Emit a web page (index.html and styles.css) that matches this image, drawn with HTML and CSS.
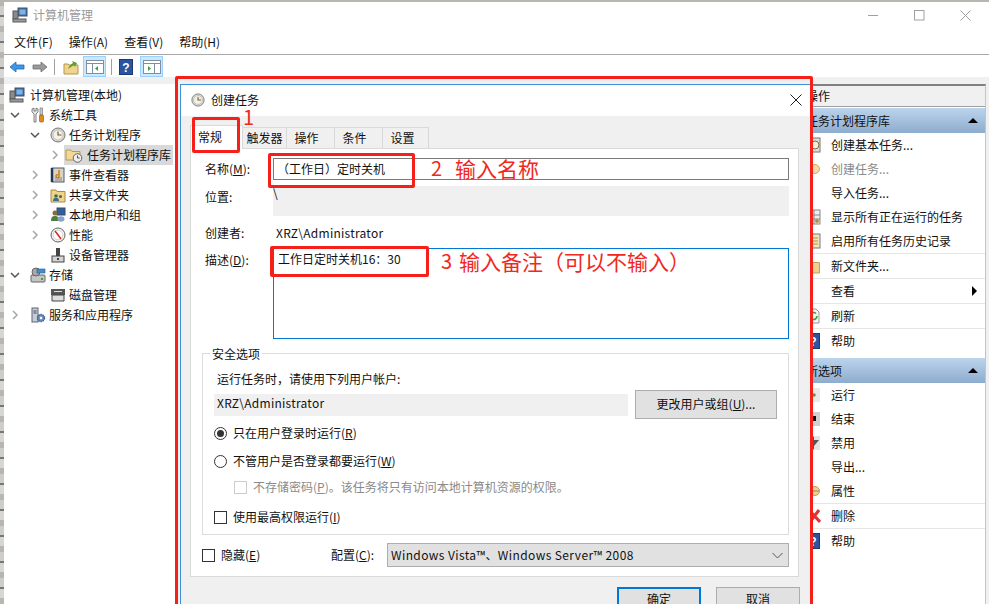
FILE: index.html
```html
<!DOCTYPE html>
<html lang="zh-CN">
<head>
<meta charset="utf-8">
<title>计算机管理</title>
<link rel="stylesheet" href="styles.css">
</head>
<body>
<svg class="defs" width="0" height="0" aria-hidden="true">
  <defs>
    <symbol id="pc" viewBox="0 0 16 16">
      <rect x="6" y="1" width="9" height="8" fill="#3a6ea8" stroke="#40506a"/>
      <rect x="7.500" y="2.500" width="6" height="5" fill="#7fb2e5"/>
      <rect x="1" y="4" width="5" height="8" fill="#8a8a8a" stroke="#555"/>
      <rect x="1" y="12" width="13" height="3" fill="#9a9a9a" stroke="#5c5c5c"/>
    </symbol>
    <symbol id="tools" viewBox="0 0 16 16">
      <path d="M2 2v3l2 2v8h2V7l2-2V2L6 1v3H4V1z" fill="#e8e8e8" stroke="#666" stroke-width=".8"/>
      <rect x="10" y="1" width="2.500" height="7" fill="#ccc" stroke="#666" stroke-width=".6"/>
      <rect x="9.500" y="8" width="4" height="7" rx="1" fill="#e08a1c" stroke="#8a5210" stroke-width=".6"/>
    </symbol>
    <symbol id="clock" viewBox="0 0 16 16">
      <circle cx="8" cy="8" r="7" fill="#d8d8d8" stroke="#777"/>
      <circle cx="8" cy="8" r="5" fill="#f4f1e6" stroke="#aaa" stroke-width=".6"/>
      <path d="M8 4.500V8h3.500" fill="none" stroke="#7a5a20" stroke-width="1.200"/>
    </symbol>
    <symbol id="folderclock" viewBox="0 0 18 16">
      <path d="M1 3h5l1 1.500h8V13H1z" fill="#f2d896" stroke="#b89a50"/>
      <circle cx="12.500" cy="11" r="4.300" fill="#eee" stroke="#666"/>
      <path d="M12.500 8.500V11h2.200" fill="none" stroke="#555"/>
    </symbol>
    <symbol id="log" viewBox="0 0 16 16">
      <rect x="2" y="1" width="12" height="14" fill="#d9d3c0" stroke="#4a5a78"/>
      <path d="M2 1v14" stroke="#24345a" stroke-width="2.500"/>
      <path d="M9 3v6a1.500 1.500 0 1 1-1-1.300" fill="none" stroke="#c9781a" stroke-width="1.400"/>
      <path d="M5 11h7M5 13h7" stroke="#8a8a8a"/>
    </symbol>
    <symbol id="share" viewBox="0 0 16 16">
      <path d="M1 3h5l1 1.500h8V15H1z" fill="#f0d38a" stroke="#a88c48"/>
      <circle cx="6" cy="9" r="1.800" fill="#3f6d3f"/>
      <path d="M3 14c0-2.500 1-3 3-3s3 .5 3 3z" fill="#3f6d8f"/>
      <circle cx="10.500" cy="9.500" r="1.500" fill="#3f6d3f"/>
    </symbol>
    <symbol id="users" viewBox="0 0 16 16">
      <rect x="7" y="1" width="8" height="7" fill="#2f5f9f" stroke="#3d4a60"/>
      <circle cx="5" cy="6" r="2.500" fill="#8a6a3a"/>
      <path d="M1 14c0-4 1.500-5 4-5s4 1 4 5z" fill="#4f7f3f"/>
      <ellipse cx="11" cy="12" rx="3.500" ry="2.800" fill="#8aa4c4"/>
    </symbol>
    <symbol id="perf" viewBox="0 0 16 16">
      <circle cx="8" cy="8" r="7" fill="#f2f2f2" stroke="#666"/>
      <circle cx="8" cy="8" r="4.800" fill="#fff" stroke="#bbb" stroke-width=".6"/>
      <path d="M5 4l3.500 4.500L11 12" fill="none" stroke="#d8261c" stroke-width="1.500"/>
    </symbol>
    <symbol id="devices" viewBox="0 0 16 16">
      <rect x="6" y="1" width="4" height="8" fill="#444"/>
      <rect x="2" y="9" width="12" height="6" fill="#d4d4d4" stroke="#444"/>
      <rect x="7" y="11" width="2" height="2" fill="#444"/>
    </symbol>
    <symbol id="storage" viewBox="0 0 16 16">
      <rect x="1" y="8" width="14" height="7" rx="1" fill="#c4c4c4" stroke="#666"/>
      <circle cx="6" cy="5" r="4" fill="#a8a8a8" stroke="#666"/>
      <rect x="7" y="2" width="8" height="4" fill="#3f8fd0" stroke="#2a5a88" stroke-width=".6"/>
      <rect x="11" y="11" width="2" height="2" fill="#3fa040"/>
    </symbol>
    <symbol id="disk" viewBox="0 0 16 16">
      <rect x="1" y="2" width="14" height="6" fill="#555"/>
      <path d="M2 8h12v6H2z" fill="#ddd" stroke="#444"/>
      <rect x="4" y="4" width="8" height="1" fill="#ddd"/>
    </symbol>
    <symbol id="services" viewBox="0 0 16 16">
      <rect x="2" y="1" width="6" height="14" fill="#c8ccd4" stroke="#5a6478"/>
      <path d="M3.500 4h3M3.500 6h3" stroke="#445"/>
      <circle cx="11" cy="11" r="3.500" fill="#6d93c4" stroke="#3d5f8c" stroke-dasharray="1.500 .7" stroke-width="1.400"/>
      <circle cx="11" cy="11" r="1.200" fill="#fff"/>
    </symbol>
    <symbol id="help" viewBox="0 0 16 16">
      <rect x="1.500" y=".5" width="13" height="15" fill="#2a55a0" stroke="#1c3a70"/>
      <text x="8" y="13" font-size="12" font-weight="700" text-anchor="middle" fill="#fff" font-family="Liberation Sans, sans-serif">?</text>
    </symbol>
    <symbol id="chev-r" viewBox="0 0 10 10"><path d="M3 1l4 4-4 4" fill="none" stroke="#a6a6a6" stroke-width="1.500"/></symbol>
    <symbol id="chev-d" viewBox="0 0 10 10"><path d="M1 3l4 4 4-4" fill="none" stroke="#555" stroke-width="1.500"/></symbol>
  </defs>
</svg>

<div class="window">
  <header class="titlebar">
    <svg class="ic16 title-ic"><use href="#pc"/></svg>
    <span class="title-text">计算机管理</span>
    <div class="controls">
      <svg width="11" height="11" viewBox="0 0 11 11"><path d="M0 5.500h10" stroke="#a0a0a0"/></svg>
      <svg width="11" height="11" viewBox="0 0 11 11"><rect x=".5" y=".5" width="9.500" height="9.500" fill="none" stroke="#a0a0a0"/></svg>
      <svg width="11" height="11" viewBox="0 0 11 11"><path d="M.5.500l10 10M10.500.500l-10 10" stroke="#a0a0a0"/></svg>
    </div>
  </header>
  <nav class="menubar">
    <span>文件(F)</span><span>操作(A)</span><span>查看(V)</span><span>帮助(H)</span>
  </nav>
  <div class="toolbar">
    <svg class="tb-ic" viewBox="0 0 16 16"><path d="M1 8l6-5v3h8v4H7v3z" fill="#3d96e8" stroke="#1e6ab8" stroke-width=".8"/></svg>
    <svg class="tb-ic tb-fwd" viewBox="0 0 16 16"><path d="M15 8L9 3v3H1v4h8v3z" fill="#9a9a9a" stroke="#6e6e6e" stroke-width=".8"/></svg>
    <i class="tb-sep"></i>
    <svg class="tb-ic tb-up" viewBox="0 0 16 16"><path d="M1 5h4l1 1h9v9H1z" fill="#f0d48c" stroke="#b49650"/><path d="M5 10c1-3 3-5 5-6l-1-2 5 2-2 4-1-2c-2 1-4 3-6 4z" fill="#5aa02c"/></svg>
    <span class="tb-toggle">
      <svg width="18" height="16" viewBox="0 0 18 16"><rect x=".5" y="1.500" width="17" height="13" fill="#fff" stroke="#7f8f9f"/><path d="M1 4.500h16M6.500 5v9" stroke="#7f8f9f"/><path d="M12 7v5l-3-2.500z" fill="#3fa040"/></svg>
    </span>
    <i class="tb-sep tb-sep2"></i>
    <svg class="tb-ic tb-help"><use href="#help"/></svg>
    <span class="tb-toggle tb-toggle2">
      <svg width="18" height="16" viewBox="0 0 18 16"><rect x=".5" y="1.500" width="17" height="13" fill="#fff" stroke="#7f8f9f"/><path d="M1 4.500h16M11.500 5v9" stroke="#7f8f9f"/><path d="M5 7v5l3-2.500z" fill="#3fa040"/></svg>
    </span>
  </div>

  <main class="main">
    <aside class="tree">
      <div class="row l0"><svg class="ic16"><use href="#pc"/></svg><span>计算机管理(本地)</span></div>
      <div class="row l1"><svg class="chev"><use href="#chev-d"/></svg><svg class="ic16"><use href="#tools"/></svg><span>系统工具</span></div>
      <div class="row l2"><svg class="chev"><use href="#chev-d"/></svg><svg class="ic16"><use href="#clock"/></svg><span>任务计划程序</span></div>
      <div class="row l3"><svg class="chev"><use href="#chev-r"/></svg><div class="sel"><svg class="ic18"><use href="#folderclock"/></svg><span>任务计划程序库</span></div></div>
      <div class="row l2"><svg class="chev"><use href="#chev-r"/></svg><svg class="ic16"><use href="#log"/></svg><span>事件查看器</span></div>
      <div class="row l2"><svg class="chev"><use href="#chev-r"/></svg><svg class="ic16"><use href="#share"/></svg><span>共享文件夹</span></div>
      <div class="row l2"><svg class="chev"><use href="#chev-r"/></svg><svg class="ic16"><use href="#users"/></svg><span>本地用户和组</span></div>
      <div class="row l2"><svg class="chev"><use href="#chev-r"/></svg><svg class="ic16"><use href="#perf"/></svg><span>性能</span></div>
      <div class="row l2"><i class="chev"></i><svg class="ic16"><use href="#devices"/></svg><span>设备管理器</span></div>
      <div class="row l1"><svg class="chev"><use href="#chev-d"/></svg><svg class="ic16"><use href="#storage"/></svg><span>存储</span></div>
      <div class="row l2"><i class="chev"></i><svg class="ic16"><use href="#disk"/></svg><span>磁盘管理</span></div>
      <div class="row l1"><svg class="chev"><use href="#chev-r"/></svg><svg class="ic16"><use href="#services"/></svg><span>服务和应用程序</span></div>
    </aside>
    <div class="center"></div>
    <aside class="actions">
      <div class="act-title">操作</div>
      <div class="act-head"><span>任务计划程序库</span><i class="tri"></i></div>
      <div class="act"><svg class="ic16" viewBox="0 0 16 16"><rect x="1" y="1" width="14" height="14" fill="#ddd" stroke="#777"/><circle cx="10" cy="8" r="4" fill="#f4efe0" stroke="#8a6a30"/></svg><span>创建基本任务...</span></div>
      <div class="act act-dis"><svg class="ic16" viewBox="0 0 16 16"><circle cx="10" cy="8" r="4.500" fill="#f0dca8" stroke="#d8a850"/></svg><span>创建任务...</span></div>
      <div class="act"><i class="ic16"></i><span>导入任务...</span></div>
      <div class="act"><svg class="ic16" viewBox="0 0 16 16"><rect x="1" y="1" width="14" height="14" fill="#eee" stroke="#888"/><path d="M9 1v14M1 6h14M1 10h14" stroke="#888"/><circle cx="12" cy="12" r="2" fill="#b09050"/></svg><span>显示所有正在运行的任务</span></div>
      <div class="act sep"><svg class="ic16" viewBox="0 0 16 16"><rect x="2" y="1" width="13" height="14" fill="#f4e4b0" stroke="#6a7a98"/><path d="M5 5h8M5 8h8M5 11h8" stroke="#b09050"/></svg><span>启用所有任务历史记录</span></div>
      <div class="act sep"><svg class="ic16" viewBox="0 0 16 16"><path d="M1 3h6l1 1.500h6.500V15H1z" fill="#f0d08a" stroke="#c0a060"/></svg><span>新文件夹...</span></div>
      <div class="act sep"><i class="ic16"></i><span>查看</span><i class="sub"></i></div>
      <div class="act sep"><svg class="ic16" viewBox="0 0 16 16"><path d="M2 1h9l3 3v11H2z" fill="#f4f4f4" stroke="#999"/><path d="M12 8a3.500 3.500 0 1 1-1-2.500" fill="none" stroke="#35a035" stroke-width="1.600"/></svg><span>刷新</span></div>
      <div class="act"><svg class="ic16"><use href="#help"/></svg><span>帮助</span></div>
      <div class="act-head act-head2"><span>所选项</span><i class="tri"></i></div>
      <div class="act"><svg class="ic16" viewBox="0 0 16 16"><rect x="1" y="1" width="14" height="14" fill="#eaeaea"/><circle cx="9" cy="8" r="1.800" fill="#4aa82e"/></svg><span>运行</span></div>
      <div class="act"><svg class="ic16" viewBox="0 0 16 16"><rect x="1" y="1" width="14" height="14" fill="#d0d0d0"/><rect x="6" y="5" width="5" height="5" fill="#111"/></svg><span>结束</span></div>
      <div class="act"><svg class="ic16" viewBox="0 0 16 16"><rect x="1" y="1" width="14" height="14" fill="#e4e4e4"/><path d="M9 1v4h5l-5 6v4l-5-7z" fill="#555"/></svg><span>禁用</span></div>
      <div class="act"><i class="ic16"></i><span>导出...</span></div>
      <div class="act sep"><svg class="ic16" viewBox="0 0 16 16"><circle cx="10" cy="8" r="4.500" fill="#f0d08a" stroke="#c89a50"/><path d="M6 8h8" stroke="#888"/></svg><span>属性</span></div>
      <div class="act sep"><svg class="ic16" viewBox="0 0 16 16"><path d="M5 3l10 11M14 2L5 14" stroke="#e03030" stroke-width="3"/></svg><span>删除</span></div>
      <div class="act"><svg class="ic16"><use href="#help"/></svg><span>帮助</span></div>
    </aside>
  </main>

  <section class="dialog">
    <div class="dlg-title">
      <svg class="ic14"><use href="#clock"/></svg>
      <span>创建任务</span>
      <svg class="dlg-close" width="12" height="12" viewBox="0 0 12 12"><path d="M.5.500l11 11M11.500.500l-11 11" stroke="#222"/></svg>
    </div>
    <div class="dlg-body">
      <div class="tabs">
        <span class="tab tab-active">常规</span>
        <span class="tab t1">触发器</span>
        <span class="tab t2">操作</span>
        <span class="tab t2">条件</span>
        <span class="tab t3">设置</span>
      </div>
      <div class="panel">
        <div class="field f-name">
          <label>名称(<u>M</u>):</label>
          <div class="input">（工作日）定时关机</div>
        </div>
        <div class="field f-loc">
          <label>位置:</label>
          <div class="readonly">\</div>
        </div>
        <div class="field f-author">
          <label>创建者:</label>
          <div class="author latin">XRZ\Administrator</div>
        </div>
        <div class="field f-desc">
          <label>描述(<u>D</u>):</label>
          <div class="textarea">工作日定时关机16：30</div>
        </div>
        <div class="group">
          <div class="legend">安全选项</div>
          <div class="g-text">运行任务时，请使用下列用户帐户:</div>
          <div class="g-user">
            <div class="g-field latin">XRZ\Administrator</div>
            <div class="btn btn-user">更改用户或组(<u>U</u>)...</div>
          </div>
          <div class="opt o1"><i class="radio on"></i><span>只在用户登录时运行(<u>R</u>)</span></div>
          <div class="opt o2"><i class="radio"></i><span>不管用户是否登录都要运行(<u>W</u>)</span></div>
          <div class="opt o3 disabled"><i class="check"></i><span>不存储密码(<u>P</u>)。该任务将只有访问本地计算机资源的权限。</span></div>
          <div class="opt o4"><i class="check"></i><span>使用最高权限运行(<u>I</u>)</span></div>
        </div>
        <div class="bottom">
          <i class="check"></i>
          <span class="b-hide">隐藏(<u>E</u>)</span>
          <span class="b-conf">配置(<u>C</u>):</span>
          <div class="select">
            <span class="select-text">Windows Vista™、Windows Server™ 2008</span>
            <svg width="11" height="7" viewBox="0 0 11 7"><path d="M.5 1l5 5 5-5" fill="none" stroke="#555"/></svg>
          </div>
        </div>
      </div>
      <div class="dlg-buttons">
        <div class="btn btn-main btn-ok">确定</div>
        <div class="btn btn-main">取消</div>
      </div>
    </div>
  </section>
</div>

<div class="mark mark-big"></div>
<div class="mark mark-tab"></div>
<div class="mark mark-name"></div>
<div class="mark mark-desc"></div>
<span class="note n1">1</span>
<span class="note n2">2</span>
<span class="note n2t">输入名称</span>
<span class="note n3">3</span>
<span class="note n3t">输入备注（可以不输入）</span>
</body>
</html>
```
FILE: styles.css
```css
* { box-sizing: border-box; }
html, body { margin: 0; height: 100%; }
body {
  position: relative;
  width: 989px;
  height: 604px;
  overflow: hidden;
  padding: 2px 0 0 4px;
  background: repeating-linear-gradient(0deg, #b9b6b2 0 6px, #d8d6d3 6px 15px, #77757a 15px 17px, #cfcdca 17px 26px);
  font: 12px/18px "Noto Sans CJK SC", "Noto Sans", sans-serif;
  color: #111;
}
.defs { position: absolute; }
u { text-underline-offset: 1px; }
.latin { letter-spacing: .25px; }
.ic16 { width: 16px; height: 16px; flex: none; display: block; }
.ic18 { width: 18px; height: 16px; flex: none; display: block; }
.ic14 { width: 14px; height: 14px; flex: none; display: block; }

.window {
  position: relative;
  height: 602px;
  background: #fff;
  display: flex;
  flex-direction: column;
  overflow: hidden;
}
.titlebar { height: 28px; flex: none; display: flex; align-items: center; padding: 0 0 2px 8px; color: #999; font-size: 12px; }
.title-ic { margin-right: 5px; }
.controls { margin-left: auto; display: flex; gap: 35px; padding-right: 18px; }
.menubar { height: 25px; flex: none; display: flex; gap: 16px; align-items: center; padding-left: 10px; border-bottom: 1px solid #a8a8a8; }
.toolbar { height: 22px; flex: none; padding: 1px 0 0 5px; display: flex; align-items: center; }
.tb-ic { width: 16px; height: 16px; flex: none; display: block; }
.tb-fwd { margin-left: 7px; }
.tb-up { margin-left: 15px; }
.tb-sep { width: 1px; height: 16px; background: #a0a0a0; margin-left: 6px; }
.tb-sep + .tb-up { margin-left: 8px; }
.tb-sep2 { margin-left: 5px; }
.tb-help { margin-left: 6px; }
.tb-toggle { width: 23px; height: 21px; background: #cce8ff; border: 1px solid #99d1ff; display: flex; align-items: center; justify-content: center; margin-left: 4px; }
.tb-toggle2 { margin-left: 6px; }

.main { flex: 1; min-height: 0; background: #f0f0f0; padding-top: 7px; display: flex; }
.tree { width: 171px; flex: none; background: #fff; padding-top: 1px; }
.row { height: 20px; display: flex; align-items: center; }
.row span { white-space: nowrap; }
.chev { width: 10px; height: 10px; flex: none; display: block; margin-right: 10px; }
.row .ic16 { margin-right: 3px; }
.l0 { padding-left: 5px; }
.l0 .ic16 { margin-right: 5px; }
.l1 { padding-left: 6px; }
.l2 { padding-left: 26px; }
.l3 { padding-left: 46px; }
.l3 .chev { margin-right: 4px; }
.sel { width: 109px; height: 20px; background: #d9d9d9; display: flex; align-items: center; padding-left: 1px; gap: 4px; }
.center { flex: 1; }
.actions { width: 180px; flex: none; background: #fff; border-right: 1px solid #c4c4c4; margin-right: 3px; display: flex; flex-direction: column; border-top: 2px solid #808080; }
.act-title { height: 21px; line-height: 20px; flex: none; background: #f0f0f0; border-bottom: 1px solid #a0a0a0; white-space: nowrap; }
.act-head { height: 25px; flex: none; margin-top: 1px; background: linear-gradient(#bcd4ec, #8eacce); display: flex; align-items: center; justify-content: space-between; padding-right: 7px; }
.act-head2 { margin-top: 5px; }
.tri { width: 0; height: 0; border-left: 5px solid transparent; border-right: 5px solid transparent; border-bottom: 5px solid #000; }
.act { height: 24px; flex: none; display: flex; align-items: center; gap: 10px; margin-left: -1px; padding-right: 8px; }
.act.sep { height: 25px; border-bottom: 1px solid #e6e6e6; }
.act-dis { color: #8a8a8a; }
.sub { margin-left: auto; width: 0; height: 0; border-top: 5px solid transparent; border-bottom: 5px solid transparent; border-left: 5px solid #000; }

.dialog { position: absolute; left: 176px; top: 82px; width: 632px; height: 560px; background: #fff; border: 1px solid #3f90d8; display: flex; flex-direction: column; }
.dlg-title { height: 31px; flex: none; display: flex; align-items: center; padding: 0 0 2px 10px; gap: 6px; }
.dlg-close { margin-left: auto; margin-right: 9px; }
.dlg-body { flex: 1; background: #f0f0f0; padding: 8px 12px 0 9px; }
.tabs { height: 24px; display: flex; align-items: flex-end; }
.tab { height: 21px; line-height: 20px; background: #f0f0f0; border: 1px solid #d9d9d9; border-bottom: 0; border-left: 0; text-align: center; }
.tab-active { height: 24px; width: 53px; background: #fff; border-left: 1px solid #d9d9d9; margin-bottom: -1px; position: relative; line-height: 22px; padding-right: 13px; }
.t1 { width: 44px; }
.t2 { width: 48px; padding-right: 8px; }
.t3 { width: 46px; padding-right: 6px; }
.panel { background: #fff; border: 1px solid #d9d9d9; height: 429px; padding: 9px 9px 0 14px; display: flex; flex-direction: column; }
.field { display: flex; }
.field label { width: 68px; flex: none; }
.f-name { height: 22px; align-items: center; }
.input { flex: 1; height: 22px; border: 1px solid #7a7a7a; line-height: 19px; padding-left: 3px; white-space: nowrap; }
.f-loc { margin-top: 6px; height: 30px; }
.f-loc label { padding-top: 2px; }
.readonly { flex: 1; background: #f0f0f0; line-height: 14px; }
.f-author { margin-top: 8px; height: 18px; }
.author { padding-left: 3px; }
.f-desc { margin-top: 6px; height: 91px; }
.f-desc label { padding-top: 3px; }
.textarea { flex: 1; border: 1px solid #0078d7; padding: 1px 4px; }
.group { margin: 14px 0 0 -3px; height: 182px; border: 1px solid #dcdcdc; padding-left: 11px; display: flex; flex-direction: column; }
.legend { align-self: flex-start; height: 18px; margin: -9px 0 0 -4px; padding: 0 2px; background: #fff; }
.g-text { height: 18px; margin-top: 7px; padding-left: 3px; }
.g-user { height: 29px; margin-top: 2px; display: flex; align-items: center; gap: 7px; }
.g-field { width: 414px; height: 22px; background: #f0f0f0; line-height: 18px; padding-left: 3px; }
.btn { background: #e1e1e1; border: 1px solid #adadad; text-align: center; line-height: 25px; }
.btn-user { width: 142px; height: 29px; }
.opt { height: 20px; display: flex; align-items: center; gap: 6px; }
.o1 { margin-top: 4px; }
.o2 { margin-top: 8px; }
.o3 { margin-top: 6px; padding-left: 20px; }
.o4 { margin-top: 10px; }
.disabled { color: #8a8a8a; }
.disabled .check { border-color: #ccc; }
.radio { width: 13px; height: 13px; border: 1px solid #333; border-radius: 50%; background: #fff; flex: none; display: block; position: relative; }
.radio.on::after { content: ""; position: absolute; inset: 2px; border-radius: 50%; background: #333; }
.check { width: 13px; height: 13px; border: 1px solid #333; background: #fff; flex: none; display: block; }
.bottom { margin: 8px 0 0 -3px; height: 24px; display: flex; align-items: center; }
.b-hide { margin-left: 6px; width: 110px; }
.b-conf { width: 56px; }
.select { flex: 1; height: 24px; background: #e1e1e1; border: 1px solid #adadad; display: flex; align-items: center; justify-content: space-between; padding: 0 3px; }
.select-text { letter-spacing: .4px; }
.select svg { margin-right: 2px; }
.dlg-buttons { margin: 10px -1px 0 0; display: flex; justify-content: flex-end; gap: 15px; }
.btn-main { width: 84px; height: 29px; line-height: 21px; }
.btn-ok { border: 2px solid #0078d7; line-height: 19px; }

.mark { position: absolute; border: 3px solid #f5201a; border-radius: 2px; }
.mark-big { left: 175px; top: 76px; width: 638px; height: 600px; }
.mark-tab { left: 192px; top: 117px; width: 48px; height: 36px; }
.mark-name { left: 268px; top: 153px; width: 147px; height: 35px; }
.mark-desc { left: 270px; top: 246px; width: 159px; height: 31px; }
.note { position: absolute; color: #f0281e; font-size: 21px; line-height: 24px; white-space: nowrap; }
.n1 { left: 243px; top: 108px; font-size: 20px; line-height: 18px; }
.n2 { left: 431px; top: 156px; font-size: 20px; }
.n2t { left: 455px; top: 156px; }
.n3 { left: 441px; top: 249px; font-size: 20px; }
.n3t { left: 459px; top: 249px; }
```
